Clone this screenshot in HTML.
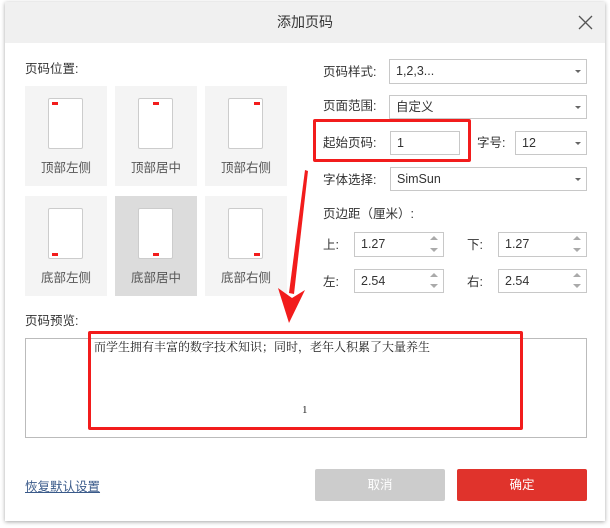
<!DOCTYPE html>
<html><head><meta charset="utf-8"><style>
*{box-sizing:border-box;margin:0;padding:0}
body{width:610px;height:528px;background:#fff;font-family:"Liberation Sans","Noto Sans CJK SC",sans-serif;font-size:12px;color:#333;position:relative;overflow:hidden}
.dlg{position:absolute;left:5px;top:2px;width:600px;height:519px;background:#fff;box-shadow:0 1px 4px rgba(0,0,0,.35)}
.hdr{position:absolute;left:5px;top:2px;width:600px;height:41px;background:#f0f0f0;text-align:center;line-height:41px;font-size:14px;color:#333}
.a{position:absolute}
.tile{position:absolute;width:82px;height:100px;background:#f4f4f4;text-align:center}
.tile .pg{position:absolute;left:23px;top:12px;width:35px;height:51px;background:#fff;border:1px solid #ccc;border-radius:2px}
.tile .mk{position:absolute;width:6px;height:3px;background:#f21c1c}
.tile .lb{position:absolute;left:0;right:0;top:71px;font-size:12.5px;color:#555}
.lbl{position:absolute;font-size:12.5px;color:#333}
.box{position:absolute;border:1px solid #c8c8c8;background:#fff;font-size:12.5px;line-height:22px;padding-left:6px;color:#333}
.dd:after{content:"";position:absolute;right:5px;top:10px;border:3px solid transparent;border-top:3px solid #666}
.sp:before{content:"";position:absolute;right:5px;top:3px;border:4px solid transparent;border-bottom:4px solid #aaa;border-top:0}
.sp:after{content:"";position:absolute;right:5px;bottom:4px;border:4px solid transparent;border-top:4px solid #aaa;border-bottom:0}
.red{position:absolute;border:3px solid #f21c1c;border-radius:2px}
</style></head><body>
<div class="dlg"></div>
<div class="hdr">添加页码</div>
<svg class="a" style="left:578px;top:15px" width="15" height="15"><path d="M1 1L14 14M14 1L1 14" stroke="#555" stroke-width="1.3"/></svg>
<div class="lbl" style="left:25px;top:58px">页码位置:</div>

<div class="tile" style="left:25px;top:86px"><div class="pg"></div><div class="mk" style="left:27px;top:16px"></div><div class="lb">顶部左侧</div></div>
<div class="tile" style="left:115px;top:86px"><div class="pg"></div><div class="mk" style="left:38px;top:16px"></div><div class="lb">顶部居中</div></div>
<div class="tile" style="left:205px;top:86px"><div class="pg"></div><div class="mk" style="left:49px;top:16px"></div><div class="lb">顶部右侧</div></div>
<div class="tile" style="left:25px;top:196px"><div class="pg"></div><div class="mk" style="left:27px;top:57px"></div><div class="lb">底部左侧</div></div>
<div class="tile" style="left:115px;top:196px;background:#dcdcdc"><div class="pg"></div><div class="mk" style="left:38px;top:57px"></div><div class="lb">底部居中</div></div>
<div class="tile" style="left:205px;top:196px"><div class="pg"></div><div class="mk" style="left:49px;top:57px"></div><div class="lb">底部右侧</div></div>

<div class="lbl" style="left:323px;top:61px">页码样式:</div>
<div class="box dd" style="left:389px;top:59px;width:198px;height:25px">1,2,3...</div>
<div class="lbl" style="left:323px;top:95px">页面范围:</div>
<div class="box dd" style="left:389px;top:95px;width:198px;height:24px">自定义</div>
<div class="lbl" style="left:323px;top:132px">起始页码:</div>
<div class="box" style="left:390px;top:131px;width:70px;height:24px">1</div>
<div class="red" style="left:313px;top:119px;width:158px;height:43px"></div>
<div class="lbl" style="left:477px;top:132px">字号:</div>
<div class="box dd" style="left:515px;top:131px;width:72px;height:24px">12</div>
<div class="lbl" style="left:323px;top:169px">字体选择:</div>
<div class="box dd" style="left:390px;top:167px;width:197px;height:24px">SimSun</div>
<div class="lbl" style="left:323px;top:203px">页边距（厘米）:</div>
<div class="lbl" style="left:323px;top:234px">上:</div>
<div class="box sp" style="left:354px;top:232px;width:90px;height:25px">1.27</div>
<div class="lbl" style="left:467px;top:234px">下:</div>
<div class="box sp" style="left:498px;top:232px;width:89px;height:25px">1.27</div>
<div class="lbl" style="left:323px;top:271px">左:</div>
<div class="box sp" style="left:354px;top:269px;width:90px;height:24px">2.54</div>
<div class="lbl" style="left:467px;top:271px">右:</div>
<div class="box sp" style="left:498px;top:269px;width:89px;height:24px">2.54</div>

<div class="lbl" style="left:25px;top:310px">页码预览:</div>
<div class="a" style="left:25px;top:338px;width:562px;height:100px;border:1px solid #bbb"></div>
<div class="a" style="left:-43px;top:338px;width:610px;text-align:center;font-family:'Liberation Serif','Noto Serif CJK SC',serif;font-size:12px;color:#222">而学生拥有丰富的数字技术知识；同时，老年人积累了大量养生</div>
<div class="a" style="left:302px;top:404px;font-family:'Liberation Serif',serif;font-size:11px;color:#222">1</div>
<div class="red" style="left:88px;top:331px;width:435px;height:99px"></div>

<svg class="a" style="left:270px;top:160px" width="50" height="170"><path d="M35 10L38 11L24 134L19 133Z" fill="#f21c1c"/><path d="M8 128L19 163L35 130L22 138Z" fill="#f21c1c"/></svg>

<div class="a" style="left:25px;top:476px;font-size:12.5px;color:#3a5a8a;text-decoration:underline">恢复默认设置</div>
<div class="a" style="left:315px;top:469px;width:130px;height:32px;background:#cccccc;border-radius:2px;color:#fff;text-align:center;line-height:32px;font-size:12.5px">取消</div>
<div class="a" style="left:457px;top:469px;width:130px;height:32px;background:#e0332c;border-radius:2px;color:#fff;text-align:center;line-height:32px;font-size:12.5px">确定</div>
</body></html>
